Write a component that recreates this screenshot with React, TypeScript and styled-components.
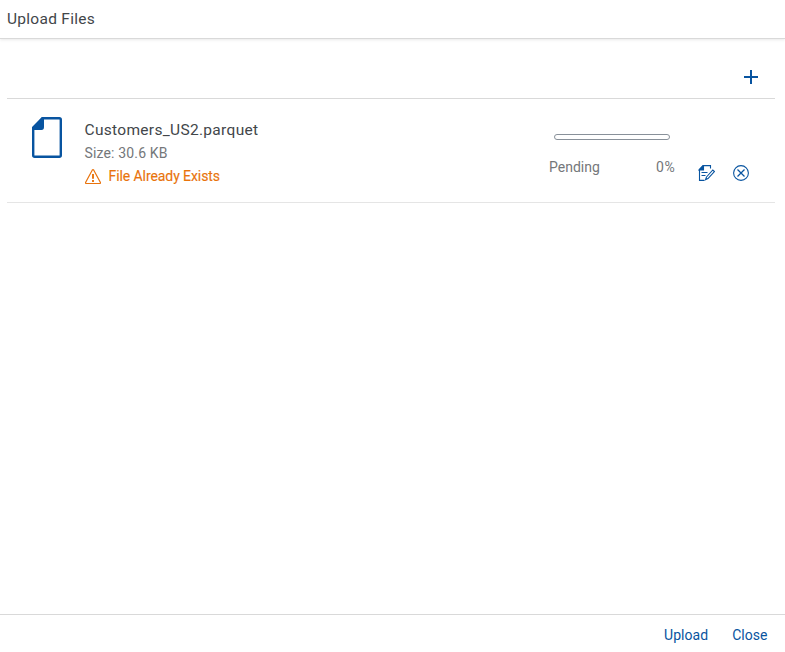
import React from 'react';
import styled, { createGlobalStyle } from 'styled-components';

const GlobalStyle = createGlobalStyle`
  *, *::before, *::after { box-sizing: border-box; }
  body { margin: 0; background: #fff; }
  button { font: inherit; color: inherit; background: none; border: 0; padding: 0; }
`;

const Dialog = styled.div`
  display: flex;
  flex-direction: column;
  height: 652px;
  overflow: hidden;
  background: #fff;
  color: #42464a;
  font-family: Roboto, 'Liberation Sans', sans-serif;
  font-size: 14px;
`;

const Header = styled.header`
  height: 39px;
  padding: 9px 7px 0;
  border-bottom: 1px solid #d9d9d9;
  box-shadow: 0 1px 3px rgba(0, 0, 0, 0.09);
`;

const Title = styled.h1`
  margin: 0;
  font-size: 15.5px;
  line-height: 20px;
  font-weight: 400;
  letter-spacing: 0.28px;
`;

const Content = styled.main`
  flex: 1;
  padding: 16px 10px 0 7px;
`;

const Toolbar = styled.div`
  display: flex;
  justify-content: flex-end;
  align-items: center;
  height: 44px;
  padding-right: 16px;
  border-bottom: 1px solid #d9d9d9;
`;

const IconButton = styled.button`
  display: block;
  height: 16px;
  color: #0854a0;
  svg { display: block; }
`;

const FileRow = styled.div`
  display: flex;
  height: 104px;
  border-bottom: 1px solid #e5e5e5;
`;

const FileIcon = styled.div`
  width: 77.5px;
  padding: 18px 0 0 24px;
`;

const Details = styled.div`
  flex: 1;
  padding-top: 20px;
`;

const FileName = styled.div`
  font-size: 15.5px;
  line-height: 22px;
  letter-spacing: 0.31px;
`;

const FileSize = styled.div`
  line-height: 24px;
  letter-spacing: 0.16px;
  color: #74777a;
`;

const Warning = styled.div`
  display: flex;
  align-items: center;
  gap: 8px;
  line-height: 23px;
  color: #e9730c;
  letter-spacing: -0.08px;
  -webkit-text-stroke: 0.15px currentColor;
`;

const Progress = styled.div`
  width: 126px;
  padding-top: 35px;
  color: #74777a;
`;

const ProgressTrack = styled.div`
  width: 116px;
  height: 6px;
  margin-left: 5px;
  border: 1px solid #89919a;
  border-radius: 3px;
`;

const ProgressLabels = styled.div`
  display: flex;
  justify-content: space-between;
  margin-top: 17px;
  line-height: 20px;
`;

const Percent = styled.span`
  letter-spacing: 0.7px;
  margin-right: -0.5px;
`;

const RowActions = styled.div`
  display: flex;
  gap: 18px;
  padding: 66px 26px 0 23px;
`;

const Footer = styled.footer`
  display: flex;
  justify-content: flex-end;
  gap: 24px;
  height: 38px;
  padding: 0 17.5px 0 0;
  border-top: 1px solid #d9d9d9;
`;

const TextButton = styled.button`
  height: 40px;
  color: #0854a0;
  letter-spacing: 0.04px;
`;

export default function App() {
  return (
    <>
      <GlobalStyle />
      <Dialog>
        <Header>
          <Title>Upload Files</Title>
        </Header>
        <Content>
          <Toolbar>
            <IconButton aria-label="Add files">
              <svg width="16" height="16" viewBox="0 0 16 16" stroke="currentColor" strokeWidth="2">
                <path d="M1 8h14M8 1v14" />
              </svg>
            </IconButton>
          </Toolbar>
          <FileRow>
            <FileIcon>
              <svg width="32" height="42" viewBox="0 0 32 42">
                <path d="M11.500 1.200H28.300Q29.800 1.200 29.800 2.700V38.300Q29.800 39.800 28.300 39.800H3.700Q2.200 39.800 2.200 38.300V10.500Z" fill="none" stroke="#0854a0" strokeWidth="2.400" />
                <path d="M1 11L11 0H13V10Q13 13 10.500 13H1Z" fill="#0854a0" />
              </svg>
            </FileIcon>
            <Details>
              <FileName>Customers_US2.parquet</FileName>
              <FileSize>Size: 30.6 KB</FileSize>
              <Warning>
                <svg width="16" height="16" viewBox="0 0 16 16" fill="none" stroke="currentColor" strokeWidth="1.200">
                  <path d="M7.200 1.200Q8 0 8.800 1.200L15.300 13.300Q15.800 14.500 14.600 14.500H1.400Q.2 14.500.7 13.300Z" />
                  <path d="M8 5v4.800M8 11v2" strokeWidth="1.900" />
                </svg>
                <span>File Already Exists</span>
              </Warning>
            </Details>
            <Progress>
              <ProgressTrack />
              <ProgressLabels>
                <span>Pending</span>
                <Percent>0%</Percent>
              </ProgressLabels>
            </Progress>
            <RowActions>
              <IconButton aria-label="Edit">
                <svg width="17" height="16" viewBox="0 0 17 16" fill="none" stroke="currentColor" strokeWidth="1.100">
                  <path d="M12.500 3.500V.6H5L1.500 4.500V15.400H6.500" />
                  <path d="M1 5L5.500 .5V5Z" fill="currentColor" />
                  <path d="M3.500 7.500H9.500M3.500 10.500H7.500M8.500 12L14.800 5L16.400 6.500L10 13.500L7.500 14.700Z" />
                </svg>
              </IconButton>
              <IconButton aria-label="Remove">
                <svg width="16" height="16" viewBox="0 0 16 16" fill="none" stroke="currentColor" strokeWidth="1.100">
                  <circle cx="8" cy="8" r="7.400" />
                  <path d="M4.500 4.500L11.500 11.500M11.500 4.500L4.500 11.500" strokeWidth="1.300" />
                </svg>
              </IconButton>
            </RowActions>
          </FileRow>
        </Content>
        <Footer>
          <TextButton>Upload</TextButton>
          <TextButton>Close</TextButton>
        </Footer>
      </Dialog>
    </>
  );
}
